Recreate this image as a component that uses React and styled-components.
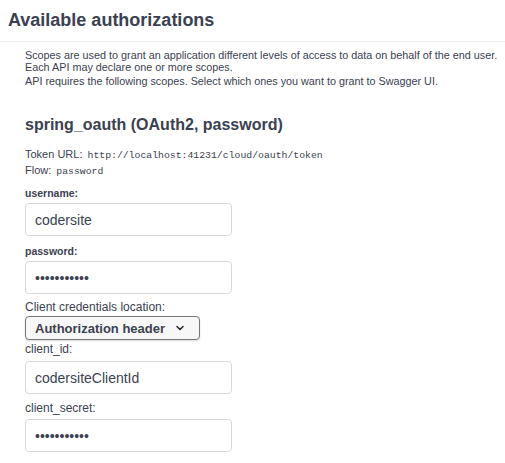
import React from 'react';
import styled, {createGlobalStyle} from 'styled-components';

const GlobalStyle = createGlobalStyle`
  body {
    margin: 0;
    background: #ffffff;
    font-family: 'Liberation Sans', Arial, sans-serif;
    color: #3b4151;
  }
`;

const App = () => {
  return (
    <>
      <GlobalStyle />
      <Page>
        <Header>
          <Title>Available authorizations</Title>
        </Header>
        <Content>
          <Description>
            <p>Scopes are used to grant an application different levels of access to data on behalf of the end user. Each API may declare one or more scopes.</p>
            <p>API requires the following scopes. Select which ones you want to grant to Swagger UI.</p>
          </Description>
          <SchemeTitle>spring_oauth (OAuth2, password)</SchemeTitle>
          <Info>Token URL: <Code>http://localhost:41231/cloud/oauth/token</Code></Info>
          <Info>Flow: <Code>password</Code></Info>

          <Field $gap={8}>
            <Label>username:</Label>
            <TextInput type="text" defaultValue="codersite" readOnly />
          </Field>
          <Field $gap={9}>
            <Label>password:</Label>
            <TextInput type="password" defaultValue="codersite01" readOnly />
          </Field>
          <Field $gap={6}>
            <PlainLabel>Client credentials location:</PlainLabel>
            <Select>
              <span>Authorization header</span>
              <svg width="10" height="10" viewBox="0 0 10 10">
                <path d="M2 3.5 L5 6.5 L8 3.5" fill="none" stroke="#222" strokeWidth="1.5" strokeLinecap="round" strokeLinejoin="round" />
              </svg>
            </Select>
          </Field>
          <Field $gap={2}>
            <PlainLabel>client_id:</PlainLabel>
            <TextInput type="text" defaultValue="codersiteClientId" readOnly $offset={5} />
          </Field>
          <Field $gap={7}>
            <PlainLabel>client_secret:</PlainLabel>
            <TextInput type="password" defaultValue="codersite01" readOnly />
          </Field>
        </Content>
      </Page>
    </>
  );
};

const Page = styled.div`
  width: 505px;
  height: 463px;
  overflow: hidden;
`;

const Header = styled.div`
  height: 41px;
  border-bottom: 1px solid #ebebeb;
  padding: 0 8px;
  display: flex;
  align-items: center;
`;

const Title = styled.h3`
  margin: 0;
  font-size: 18px;
  font-weight: bold;
  color: #3b4151;
`;

const Content = styled.div`
  padding: 0 5px 0 25px;
`;

const Description = styled.div`
  margin-top: 7px;
  font-size: 10.8px;
  line-height: 12px;

  p {
    margin: 0 0 2px;
  }
`;

const SchemeTitle = styled.h4`
  margin: 28px 0 13px;
  font-size: 16px;
  line-height: 19px;
  font-weight: bold;
  color: #3b4151;
`;

const Info = styled.div`
  font-size: 11px;
  line-height: 15px;
`;

const Code = styled.code`
  margin-left: 2px;
  font-family: 'Liberation Mono', 'DejaVu Sans Mono', monospace;
  font-size: 9.8px;
`;

const Field = styled.div`
  margin-top: ${p => p.$gap}px;
  display: flex;
  flex-direction: column;
  align-items: flex-start;
`;

const Label = styled.label`
  font-size: 10.5px;
  font-weight: bold;
  line-height: 12px;
`;

const PlainLabel = styled.label`
  font-size: 12px;
  line-height: 14px;
`;

const TextInput = styled.input`
  box-sizing: border-box;
  width: 207px;
  height: 33px;
  margin: ${p => p.$offset || 4}px 0 0;
  padding: 0 9px;
  border: 1px solid #d9d9d9;
  border-radius: 4px;
  background: #fff;
  font-family: 'Liberation Sans', Arial, sans-serif;
  font-size: 14px;
  color: #3b4151;
  outline: none;
`;

const Select = styled.div`
  box-sizing: border-box;
  width: 175px;
  height: 24px;
  margin-top: 2px;
  padding: 0 14px 0 9px;
  display: flex;
  align-items: center;
  justify-content: space-between;
  border: 1px solid #767676;
  border-radius: 4px;
  background: #f7f7f7;
  box-shadow: 0 1px 2px rgba(0, 0, 0, 0.15);
  font-size: 13px;
  font-weight: bold;
  color: #3b4151;
`;

export default App;
